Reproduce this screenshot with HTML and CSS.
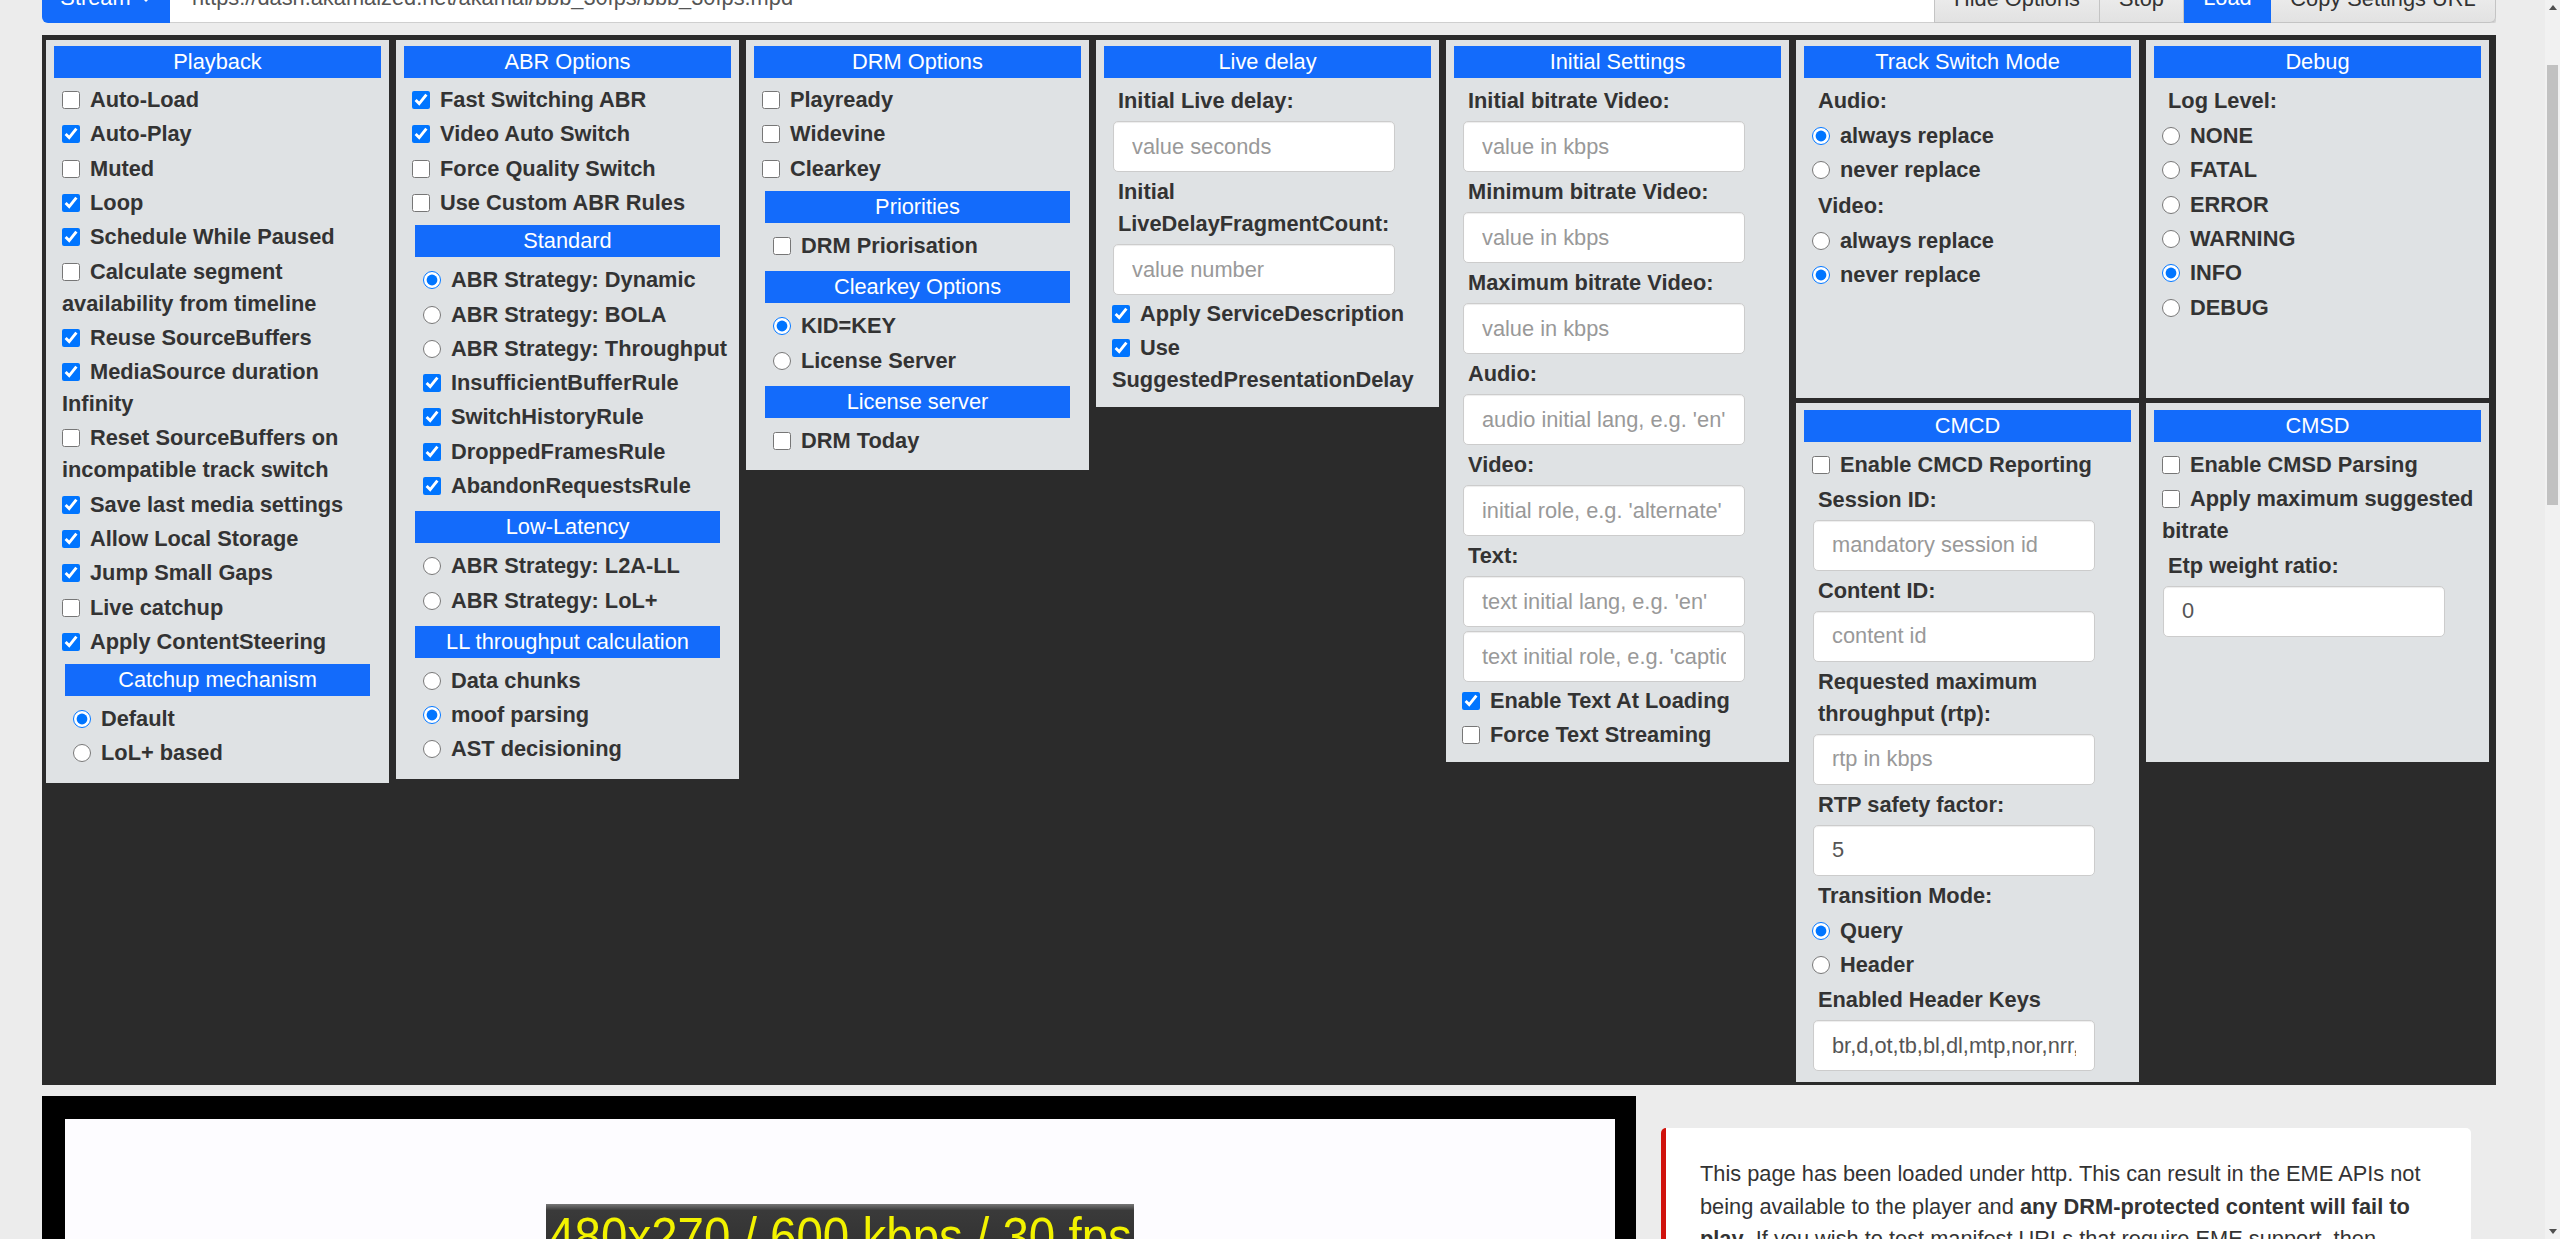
FILE: index.html
```html
<!DOCTYPE html>
<html>
<head>
<meta charset="utf-8">
<title>dash.js reference player</title>
<link rel="stylesheet" href="styles.css">
</head>
<body>
<div class="window">
  <div class="page">
    <div class="topbar">
      <div class="tb-btn tb-primary tb-first">Stream <span class="caret"></span></div>
      <div class="tb-url">https://dash.akamaized.net/akamai/bbb_30fps/bbb_30fps.mpd</div>
      <div class="tb-btn tb-default tb-hide">Hide Options</div>
      <div class="tb-btn tb-default tb-stop">Stop</div>
      <div class="tb-btn tb-primary tb-load">Load</div>
      <div class="tb-btn tb-default tb-last">Copy Settings URL</div>
    </div>

    <div class="options">
      <div class="panel">
        <div class="ph">Playback</div>
        <label class="ck"><input type="checkbox">Auto-Load</label>
        <label class="ck"><input type="checkbox" checked>Auto-Play</label>
        <label class="ck"><input type="checkbox">Muted</label>
        <label class="ck"><input type="checkbox" checked>Loop</label>
        <label class="ck"><input type="checkbox" checked>Schedule While Paused</label>
        <label class="ck"><input type="checkbox">Calculate segment availability from timeline</label>
        <label class="ck"><input type="checkbox" checked>Reuse SourceBuffers</label>
        <label class="ck"><input type="checkbox" checked>MediaSource duration Infinity</label>
        <label class="ck"><input type="checkbox">Reset SourceBuffers on incompatible track switch</label>
        <label class="ck"><input type="checkbox" checked>Save last media settings</label>
        <label class="ck"><input type="checkbox" checked>Allow Local Storage</label>
        <label class="ck"><input type="checkbox" checked>Jump Small Gaps</label>
        <label class="ck"><input type="checkbox">Live catchup</label>
        <label class="ck"><input type="checkbox" checked>Apply ContentSteering</label>
        <div class="sub">
          <div class="ph">Catchup mechanism</div>
          <label class="ck"><input type="radio" name="catchup" checked>Default</label>
          <label class="ck"><input type="radio" name="catchup">LoL+ based</label>
        </div>
      </div>

      <div class="panel">
        <div class="ph">ABR Options</div>
        <label class="ck"><input type="checkbox" checked>Fast Switching ABR</label>
        <label class="ck"><input type="checkbox" checked>Video Auto Switch</label>
        <label class="ck"><input type="checkbox">Force Quality Switch</label>
        <label class="ck"><input type="checkbox">Use Custom ABR Rules</label>
        <div class="sub">
          <div class="ph">Standard</div>
          <label class="ck"><input type="radio" name="abr" checked>ABR Strategy: Dynamic</label>
          <label class="ck"><input type="radio" name="abr">ABR Strategy: BOLA</label>
          <label class="ck"><input type="radio" name="abr">ABR Strategy: Throughput</label>
          <label class="ck"><input type="checkbox" checked>InsufficientBufferRule</label>
          <label class="ck"><input type="checkbox" checked>SwitchHistoryRule</label>
          <label class="ck"><input type="checkbox" checked>DroppedFramesRule</label>
          <label class="ck"><input type="checkbox" checked>AbandonRequestsRule</label>
        </div>
        <div class="sub">
          <div class="ph">Low-Latency</div>
          <label class="ck"><input type="radio" name="abr">ABR Strategy: L2A-LL</label>
          <label class="ck"><input type="radio" name="abr">ABR Strategy: LoL+</label>
        </div>
        <div class="sub">
          <div class="ph">LL throughput calculation</div>
          <label class="ck"><input type="radio" name="llcalc">Data chunks</label>
          <label class="ck"><input type="radio" name="llcalc" checked>moof parsing</label>
          <label class="ck"><input type="radio" name="llcalc">AST decisioning</label>
        </div>
      </div>

      <div class="panel">
        <div class="ph">DRM Options</div>
        <label class="ck"><input type="checkbox">Playready</label>
        <label class="ck"><input type="checkbox">Widevine</label>
        <label class="ck"><input type="checkbox">Clearkey</label>
        <div class="sub">
          <div class="ph">Priorities</div>
          <label class="ck"><input type="checkbox">DRM Priorisation</label>
        </div>
        <div class="sub">
          <div class="ph">Clearkey Options</div>
          <label class="ck"><input type="radio" name="clearkey" checked>KID=KEY</label>
          <label class="ck"><input type="radio" name="clearkey">License Server</label>
        </div>
        <div class="sub">
          <div class="ph">License server</div>
          <label class="ck"><input type="checkbox">DRM Today</label>
        </div>
      </div>

      <div class="panel">
        <div class="ph">Live delay</div>
        <label class="lbl">Initial Live delay:</label>
        <input class="inp" type="text" placeholder="value seconds">
        <label class="lbl">Initial LiveDelayFragmentCount:</label>
        <input class="inp" type="text" placeholder="value number">
        <label class="ck"><input type="checkbox" checked>Apply ServiceDescription</label>
        <label class="ck"><input type="checkbox" checked>Use SuggestedPresentationDelay</label>
      </div>

      <div class="panel">
        <div class="ph">Initial Settings</div>
        <label class="lbl">Initial bitrate Video:</label>
        <input class="inp" type="text" placeholder="value in kbps">
        <label class="lbl">Minimum bitrate Video:</label>
        <input class="inp" type="text" placeholder="value in kbps">
        <label class="lbl">Maximum bitrate Video:</label>
        <input class="inp" type="text" placeholder="value in kbps">
        <label class="lbl">Audio:</label>
        <input class="inp" type="text" placeholder="audio initial lang, e.g. 'en'">
        <label class="lbl">Video:</label>
        <input class="inp" type="text" placeholder="initial role, e.g. 'alternate'">
        <label class="lbl">Text:</label>
        <input class="inp" type="text" placeholder="text initial lang, e.g. 'en'">
        <input class="inp inp-tight" type="text" placeholder="text initial role, e.g. 'caption'">
        <label class="ck"><input type="checkbox" checked>Enable Text At Loading</label>
        <label class="ck"><input type="checkbox">Force Text Streaming</label>
      </div>

      <div class="grid2">
        <div class="panel">
          <div class="ph">Track Switch Mode</div>
          <label class="lbl">Audio:</label>
          <label class="ck"><input type="radio" name="tsaudio" checked>always replace</label>
          <label class="ck"><input type="radio" name="tsaudio">never replace</label>
          <label class="lbl">Video:</label>
          <label class="ck"><input type="radio" name="tsvideo">always replace</label>
          <label class="ck"><input type="radio" name="tsvideo" checked>never replace</label>
        </div>
        <div class="panel">
          <div class="ph">Debug</div>
          <label class="lbl">Log Level:</label>
          <label class="ck"><input type="radio" name="log">NONE</label>
          <label class="ck"><input type="radio" name="log">FATAL</label>
          <label class="ck"><input type="radio" name="log">ERROR</label>
          <label class="ck"><input type="radio" name="log">WARNING</label>
          <label class="ck"><input type="radio" name="log" checked>INFO</label>
          <label class="ck"><input type="radio" name="log">DEBUG</label>
        </div>
        <div class="panel panel-low">
          <div class="ph">CMCD</div>
          <label class="ck"><input type="checkbox">Enable CMCD Reporting</label>
          <label class="lbl">Session ID:</label>
          <input class="inp" type="text" placeholder="mandatory session id">
          <label class="lbl">Content ID:</label>
          <input class="inp" type="text" placeholder="content id">
          <label class="lbl">Requested maximum throughput (rtp):</label>
          <input class="inp" type="text" placeholder="rtp in kbps">
          <label class="lbl">RTP safety factor:</label>
          <input class="inp" type="text" value="5">
          <label class="lbl">Transition Mode:</label>
          <label class="ck"><input type="radio" name="cmcdmode" checked>Query</label>
          <label class="ck"><input type="radio" name="cmcdmode">Header</label>
          <label class="lbl">Enabled Header Keys</label>
          <input class="inp" type="text" value="br,d,ot,tb,bl,dl,mtp,nor,nrr,su,bs,rtp,cid,pr,sf,sid,st,v">
        </div>
        <div class="panel panel-low">
          <div class="ph">CMSD</div>
          <label class="ck"><input type="checkbox">Enable CMSD Parsing</label>
          <label class="ck"><input type="checkbox">Apply maximum suggested bitrate</label>
          <label class="lbl">Etp weight ratio:</label>
          <input class="inp" type="text" value="0">
        </div>
      </div>
    </div>

    <div class="lower">
      <div class="video-box">
        <div class="video">
          <div class="overlay">480x270 / 600 kbps / 30 fps</div>
        </div>
      </div>
      <div class="notice">
        This page has been loaded under http. This can result in the EME APIs not being available to the player and <b>any DRM-protected content will fail to play</b>. If you wish to test manifest URLs that require EME support, then reload this page under https.
      </div>
    </div>
  </div>

  <div class="scrollbar">
    <div class="sb-arrow sb-up"></div>
    <div class="sb-track"><div class="sb-thumb"></div></div>
    <div class="sb-arrow sb-down"></div>
  </div>
</div>
</body>
</html>
```

FILE: styles.css
```css
* {
  box-sizing: border-box;
}

html,
body {
  margin: 0;
  padding: 0;
}

body {
  background: #ececec;
  font-family: "Liberation Sans", Arial, sans-serif;
  font-size: 21.8px;
  line-height: 32px;
  color: #333;
  overflow: hidden;
}

.window {
  display: flex;
  height: 1239px;
  overflow: hidden;
}

.page {
  width: 2545px;
  flex: none;
}

/* ---------- top bar (scrolled, only lower half visible) ---------- */
.topbar {
  display: flex;
  align-items: flex-end;
  height: 23px;
  overflow: hidden;
  margin-left: 42px;
  width: 2454px;
}

.tb-btn {
  flex: none;
  height: 50px;
  line-height: 50px;
  text-align: center;
  white-space: nowrap;
}

.tb-primary {
  background: #136bfb;
  color: #fff;
}

.tb-default {
  background: linear-gradient(#f4f4f4, #e2e2e2);
  border: 1px solid #c4c4c4;
  color: #333;
}

.tb-first {
  width: 128px;
  border-bottom-left-radius: 6px;
}

.caret {
  display: inline-block;
  width: 0;
  height: 0;
  margin-left: 3px;
  vertical-align: middle;
  border-top: 6px solid #fff;
  border-left: 6px solid transparent;
  border-right: 6px solid transparent;
}

.tb-url {
  flex: 1;
  height: 50px;
  line-height: 50px;
  background: #fff;
  border-bottom: 1px solid #cfcfcf;
  padding-left: 22px;
  color: #555;
  white-space: nowrap;
  overflow: hidden;
}

.tb-hide {
  width: 166px;
}

.tb-stop {
  width: 84px;
  border-left: none;
}

.tb-load {
  width: 87px;
}

.tb-last {
  width: 225px;
  border-left: none;
  border-bottom-right-radius: 6px;
  box-shadow: 1px 1px 2px rgba(0, 0, 0, 0.15);
}

/* ---------- options area ---------- */
.options {
  display: flex;
  align-items: flex-start;
  gap: 7px;
  background: #2b2b2b;
  margin: 12px 0 0 42px;
  width: 2454px;
  padding: 5px 7px 3px 4px;
}

.panel {
  width: 343px;
  flex: none;
  min-height: 358.4px;
  background: #dfe2e4;
  padding: 6px 8px 9px;
}

.panel-low {
  padding-top: 7px;
}

.grid2 {
  display: grid;
  grid-template-columns: 343px 343px;
  column-gap: 7px;
  row-gap: 5px;
  align-items: start;
}

.ph {
  background: #136bfb;
  color: #fff;
  text-align: center;
  line-height: 32px;
  margin-bottom: 5px;
  white-space: nowrap;
}

.ck {
  display: block;
  padding: 1.15px 0 1.15px 8px;
  font-weight: bold;
}

.ck input {
  width: 18px;
  height: 18px;
  margin: 0 10px 0 0;
  vertical-align: -2px;
}

.lbl {
  display: block;
  padding: 2px 0 2px 14px;
  font-weight: bold;
}

.inp {
  display: block;
  width: 282px;
  height: 51px;
  margin: 2px 0 2px 9px;
  border: 1px solid #cccccc;
  border-radius: 5px;
  background: #fff;
  padding: 0 18px;
  font-family: inherit;
  font-size: 21.8px;
  color: #555;
  box-shadow: inset 0 1px 1px rgba(0, 0, 0, 0.075);
  outline: none;
}

.inp::placeholder {
  color: #999;
}

.inp-tight {
  margin-top: 4px;
}

.sub {
  margin: 5px 0 0 11px;
  padding-bottom: 3px;
}

.sub .ph {
  margin-right: 11px;
  margin-bottom: 6px;
}

.sub .ck {
  white-space: nowrap;
}

/* ---------- lower area ---------- */
.lower {
  display: flex;
  align-items: flex-start;
  gap: 25px;
  margin: 11px 0 0 42px;
}

.video-box {
  width: 1594px;
  height: 200px;
  flex: none;
  background: #000;
  padding: 23px 21px 0 23px;
}

.video {
  height: 100%;
  background: #fdfcff;
  display: flex;
  justify-content: center;
  align-items: flex-start;
  padding-top: 85px;
}

.overlay {
  background: linear-gradient(#777, #3a3a3a 6px, #2e2e2e);
  color: #f2f200;
  font-size: 47.5px;
  line-height: 56px;
  padding: 2px 2px 0;
  white-space: nowrap;
  transform: scaleY(1.08);
  transform-origin: top;
}

.notice {
  width: 810px;
  flex: none;
  margin-top: 32px;
  background: #fff;
  border-left: 5px solid #d0120c;
  border-radius: 5px;
  padding: 30px 42px 30px 34px;
  color: #333;
  line-height: 32.5px;
}

/* ---------- fake scrollbar ---------- */
.scrollbar {
  width: 15px;
  flex: none;
  background: #f1f1f1;
  display: flex;
  flex-direction: column;
}

.sb-arrow {
  height: 15px;
  flex: none;
  display: flex;
  align-items: center;
  justify-content: center;
}

.sb-up::before {
  content: "";
  border-bottom: 5px solid #505050;
  border-left: 4px solid transparent;
  border-right: 4px solid transparent;
}

.sb-down::before {
  content: "";
  border-top: 5px solid #505050;
  border-left: 4px solid transparent;
  border-right: 4px solid transparent;
}

.sb-track {
  flex: 1;
  padding: 50px 2px 0;
}

.sb-thumb {
  height: 440px;
  background: #c1c1c1;
}
```
